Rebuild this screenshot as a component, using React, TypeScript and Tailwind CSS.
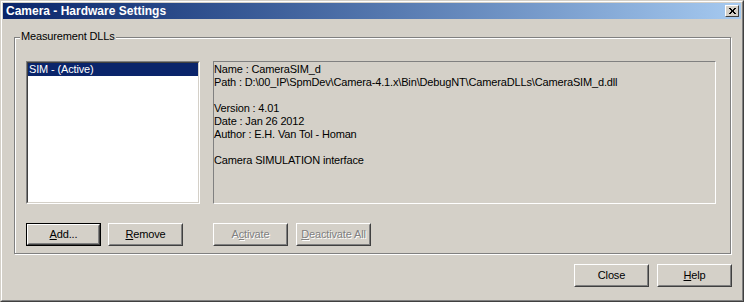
import React from 'react';

const font = { fontFamily: '"Liberation Sans", Arial, sans-serif' };

const Btn = ({
  children,
  isDefault = false,
  disabled = false,
}: {
  children: React.ReactNode;
  isDefault?: boolean;
  disabled?: boolean;
}) => {
  const face = (
    <div className="flex h-full w-full border border-t-white border-l-white border-r-[#404040] border-b-[#404040]">
      <div className="flex h-full w-full items-center justify-center border border-t-[#d4d0c8] border-l-[#d4d0c8] border-r-[#808080] border-b-[#808080]">
        <span
          className={
            disabled
              ? 'text-[11px] text-[#808080] [text-shadow:1px_1px_0_#fff]'
              : 'text-[11px] text-black'
          }
        >
          {children}
        </span>
      </div>
    </div>
  );
  if (isDefault) {
    return <div className="h-[23px] w-[75px] border border-black">{face}</div>;
  }
  return <div className="h-[23px] w-[75px]">{face}</div>;
};

export default function App() {
  return (
    <div className="h-[302px] w-[744px] bg-[#d4d0c8] tracking-[-0.15px]" style={font}>
      <div className="h-full w-full border border-t-[#d4d0c8] border-l-[#d4d0c8] border-r-[#404040] border-b-[#404040]">
        <div className="flex h-full w-full flex-col border border-t-white border-l-white border-r-[#808080] border-b-[#808080] p-px">
          {/* title bar */}
          <div className="flex h-[16px] items-center justify-between bg-gradient-to-r from-[#0a246a] to-[#a6caf0] pl-[3px] pr-[2px]">
            <span className="text-[12px] font-bold tracking-normal text-white">Camera - Hardware Settings</span>
            <div className="flex h-[12px] w-[14px] border border-t-white border-l-white border-r-[#404040] border-b-[#404040] bg-[#d4d0c8]">
              <svg viewBox="0 0 12 10" className="h-full w-full">
                <path d="M3 2 L9 8 M4 2 L10 8 M9 2 L3 8 M10 2 L4 8" stroke="#000" strokeWidth="1" />
              </svg>
            </div>
          </div>

          {/* group box */}
          <div className="relative ml-[11px] mt-[18px] h-[217px] w-[717px] border border-[#808080] shadow-[inset_1px_1px_0_#fff,1px_1px_0_#fff]">
            <span className="absolute left-[5px] top-[-8px] bg-[#d4d0c8] px-px text-[11px] leading-[13px] text-black">
              Measurement DLLs
            </span>
            <div className="flex pl-[11px] pt-[23px]">
              {/* list box */}
              <div className="h-[143px] w-[174px] border border-t-[#808080] border-l-[#808080] border-r-white border-b-white">
                <div className="h-full w-full border border-t-[#404040] border-l-[#404040] border-r-[#d4d0c8] border-b-[#d4d0c8] bg-white">
                  <div className="h-[13px] bg-[#0a246a] pl-[1px] text-[11px] leading-[13px] text-white">
                    SIM - (Active)
                  </div>
                </div>
              </div>
              {/* info panel */}
              <div className="ml-[13px] h-[143px] w-[503px] border border-t-[#808080] border-l-[#808080] border-r-white border-b-white pt-[1px] text-[11px] leading-[13px] text-black">
                <div>Name : CameraSIM_d</div>
                <div>Path : D:\00_IP\SpmDev\Camera-4.1.x\Bin\DebugNT\CameraDLLs\CameraSIM_d.dll</div>
                <div>&nbsp;</div>
                <div>Version : 4.01</div>
                <div>Date : Jan 26 2012</div>
                <div>Author : E.H. Van Tol - Homan</div>
                <div>&nbsp;</div>
                <div>Camera SIMULATION interface</div>
              </div>
            </div>
            <div className="mt-[19px] flex pl-[11px]">
              <Btn isDefault>
                <span className="underline">A</span>dd...
              </Btn>
              <div className="ml-[7px]">
                <Btn>
                  <span className="underline">R</span>emove
                </Btn>
              </div>
              <div className="ml-[30px]">
                <Btn disabled>
                  A<span className="underline">c</span>tivate
                </Btn>
              </div>
              <div className="ml-[8px]">
                <Btn disabled>
                  <span className="underline">D</span>eactivate All
                </Btn>
              </div>
            </div>
          </div>

          {/* dialog buttons */}
          <div className="mt-[10px] flex justify-end gap-[8px] pr-[9px]">
            <Btn>Close</Btn>
            <Btn>
              <span className="underline">H</span>elp
            </Btn>
          </div>
        </div>
      </div>
    </div>
  );
}
